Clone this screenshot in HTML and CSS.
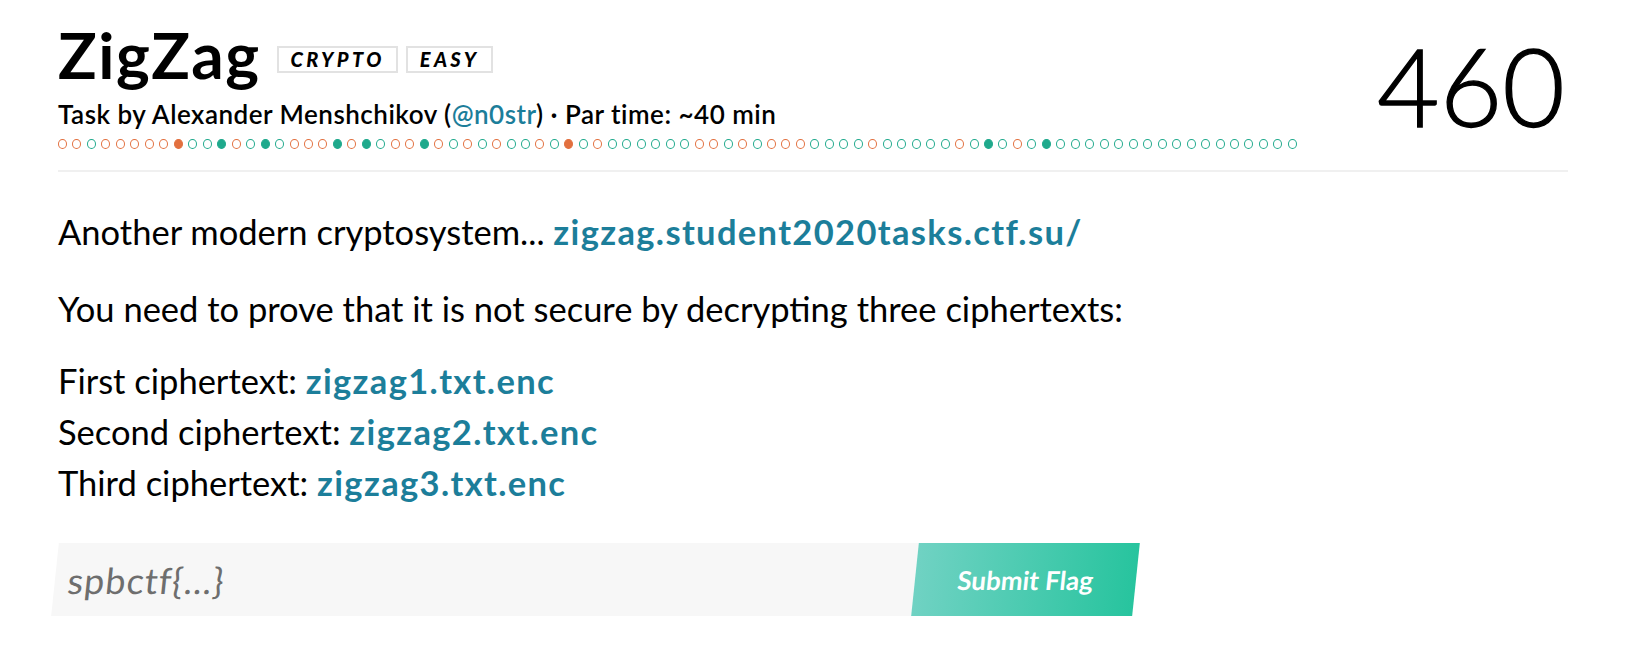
FILE: index.html
```html
<!DOCTYPE html>
<html lang="en">
<head>
<meta charset="utf-8">
<title>ZigZag</title>
<link rel="stylesheet" href="styles.css">
</head>
<body>
<div class="page">
  <header class="task-head">
    <div class="head-left">
      <div class="title-row">
        <h1 class="title">ZigZag</h1>
        <div class="tags">
          <span class="tag">CRYPTO</span>
          <span class="tag">EASY</span>
        </div>
      </div>
      <div class="subtitle">Task by Alexander Menshchikov (<a class="handle" href="#">@n0str</a>) · Par time: ~40 min</div>
      <div class="dots">
        <span class="d o"></span><span class="d o"></span><span class="d t"></span><span class="d o"></span><span class="d o"></span><span class="d o"></span><span class="d o"></span><span class="d o"></span><span class="d of"></span><span class="d t"></span>
        <span class="d t"></span><span class="d tf"></span><span class="d o"></span><span class="d t"></span><span class="d tf"></span><span class="d t"></span><span class="d o"></span><span class="d o"></span><span class="d o"></span><span class="d tf"></span>
        <span class="d o"></span><span class="d tf"></span><span class="d t"></span><span class="d o"></span><span class="d o"></span><span class="d tf"></span><span class="d o"></span><span class="d t"></span><span class="d o"></span><span class="d t"></span>
        <span class="d o"></span><span class="d t"></span><span class="d t"></span><span class="d o"></span><span class="d t"></span><span class="d of"></span><span class="d t"></span><span class="d o"></span><span class="d t"></span><span class="d t"></span>
        <span class="d t"></span><span class="d t"></span><span class="d t"></span><span class="d t"></span><span class="d o"></span><span class="d o"></span><span class="d t"></span><span class="d o"></span><span class="d t"></span><span class="d o"></span>
        <span class="d o"></span><span class="d o"></span><span class="d t"></span><span class="d t"></span><span class="d t"></span><span class="d t"></span><span class="d o"></span><span class="d t"></span><span class="d t"></span><span class="d t"></span>
        <span class="d t"></span><span class="d t"></span><span class="d o"></span><span class="d t"></span><span class="d tf"></span><span class="d t"></span><span class="d o"></span><span class="d t"></span><span class="d tf"></span><span class="d t"></span>
        <span class="d t"></span><span class="d t"></span><span class="d t"></span><span class="d t"></span><span class="d t"></span><span class="d t"></span><span class="d t"></span><span class="d t"></span><span class="d t"></span><span class="d t"></span>
        <span class="d t"></span><span class="d t"></span><span class="d t"></span><span class="d t"></span><span class="d t"></span><span class="d t"></span>
      </div>
    </div>
    <div class="score">460</div>
  </header>

  <main class="task-body">
    <p class="para">Another modern cryptosystem... <a class="link" href="#">zigzag.student2020tasks.ctf.su/</a></p>
    <p class="para">You need to prove that it is not secure by decrypting three ciphertexts:</p>
    <p class="para files">First ciphertext: <a class="link" href="#">zigzag1.txt.enc</a><br>Second ciphertext: <a class="link" href="#">zigzag2.txt.enc</a><br>Third ciphertext: <a class="link" href="#">zigzag3.txt.enc</a></p>

    <form class="flag-form">
      <input class="flag-input" type="text" placeholder="spbctf{...}">
      <button class="flag-btn" type="button">Submit Flag</button>
    </form>
  </main>
</div>
</body>
</html>
```
FILE: styles.css
```css
* { box-sizing: border-box; }

body {
  margin: 0;
  background: #ffffff;
  color: #000000;
  font-family: "Lato", "Noto Sans", sans-serif;
}

.page {
  width: 1510px;
  margin-left: 58px;
  padding-top: 25px;
}

.task-head {
  display: flex;
  justify-content: space-between;
  align-items: flex-start;
  border-bottom: 2px solid #f0f0f0;
  padding-bottom: 21px;
}

.title-row {
  display: flex;
  align-items: flex-start;
}

.title {
  margin: 0;
  font-size: 64px;
  line-height: 60px;
  font-weight: 700;
  letter-spacing: 1.5px;
}

.tags {
  display: flex;
  gap: 8px;
  margin-left: 16px;
  margin-top: 21px;
}

.tag {
  display: block;
  height: 27px;
  padding: 0 11px 0 12px;
  border: 2px solid #e2e2e2;
  font-size: 20px;
  line-height: 23px;
  font-weight: 900;
  font-style: italic;
  letter-spacing: 3.4px;
}

.subtitle {
  margin-top: 14px;
  font-size: 26px;
  line-height: 30px;
  font-weight: 600;
  letter-spacing: 0.5px;
}

.handle {
  color: #1c7e9a;
  text-decoration: none;
}

.dots {
  display: flex;
  gap: 5.48px;
  margin-top: 10px;
  height: 10px;
}

.d {
  display: block;
  width: 9px;
  height: 10px;
  border-radius: 50%;
  border: 1.5px solid;
  flex: none;
}

.o { border-color: #e2703f; }
.t { border-color: #1fa98c; }
.of { border-color: #e2703f; background: #e2703f; }
.tf { border-color: #1fa98c; background: #1fa98c; }

.score {
  margin-top: 6px;
  margin-right: 3px;
  font-size: 108px;
  line-height: 108px;
  font-weight: 300;
  -webkit-text-stroke: 1.3px #000000;
}

.task-body {
  padding-top: 34px;
}

.para {
  margin: 0 0 26px;
  font-size: 34.5px;
  line-height: 51px;
}

.link {
  color: #1c7e9a;
  font-weight: 700;
  letter-spacing: 1.35px;
  text-decoration: none;
}

.files {
  margin-top: -5px;
  margin-bottom: 35px;
}

.flag-form {
  display: flex;
  margin-left: -3px;
  width: 1081px;
  height: 73px;
  transform: skewX(-6deg);
}

.flag-input {
  flex: 1;
  height: 73px;
  border: none;
  outline: none;
  background: #f7f7f7;
  padding: 0 13px;
  font-family: "Lato", "Noto Sans", sans-serif;
  font-size: 36px;
  letter-spacing: 1px;
  color: #555555;
}

.flag-input::placeholder {
  color: #6e6e6e;
}

.flag-btn {
  width: 221px;
  height: 73px;
  border: none;
  background: linear-gradient(90deg, #70d2c3 0%, #27c49e 100%);
  color: #ffffff;
  font-family: "Lato", "Noto Sans", sans-serif;
  font-size: 26px;
  font-weight: 700;
  letter-spacing: 0;
  padding: 0;
}
```
